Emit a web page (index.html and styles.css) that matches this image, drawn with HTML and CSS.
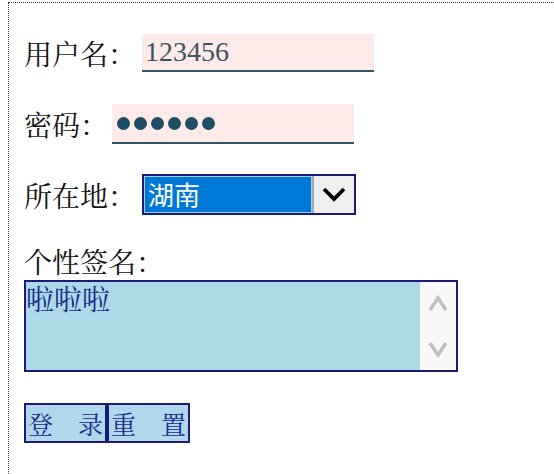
FILE: index.html
```html
<!DOCTYPE html>
<html lang="zh">
<head>
<meta charset="utf-8">
<title>表单</title>
<link rel="stylesheet" href="styles.css">
</head>
<body>
<form class="form">
  <div class="row row-user">
    <label class="label">用户名：</label>
    <input class="field field-user" type="text" value="123456">
  </div>
  <div class="row row-pwd">
    <label class="label">密码：</label>
    <div class="field field-pwd">
      <span class="dot"></span><span class="dot"></span><span class="dot"></span><span class="dot"></span><span class="dot"></span><span class="dot"></span>
    </div>
  </div>
  <div class="row row-loc">
    <label class="label">所在地：</label>
    <div class="select">
      <div class="select-value">湖南</div>
      <div class="select-btn">
        <svg width="26" height="18" viewBox="0 0 26 18"><polyline points="3,3 13,13 23,3" fill="none" stroke="#000" stroke-width="3.8"/></svg>
      </div>
    </div>
  </div>
  <div class="label label-sign">个性签名：</div>
  <div class="textarea">
    <div class="textarea-text">啦啦啦</div>
    <div class="scrollbar">
      <svg width="20" height="20" viewBox="0 0 20 20"><polyline points="2,17 10,5 18,17" fill="none" stroke="#bfbfbf" stroke-width="3.6"/></svg>
      <svg width="20" height="20" viewBox="0 0 20 20"><polyline points="2,3 10,15 18,3" fill="none" stroke="#bfbfbf" stroke-width="3.6"/></svg>
    </div>
  </div>
  <div class="buttons">
    <button type="button" class="btn">登　录</button><button type="button" class="btn">重　置</button>
  </div>
</form>
</body>
</html>
```

FILE: styles.css
```css
html {
  overflow: hidden;
}
body {
  margin: 2px 0 0 8px;
  background: #fff;
  font-family: "Noto Serif CJK SC", "Noto Sans CJK SC", "Liberation Serif", serif;
}
.form {
  width: 600px;
  min-height: 520px;
  border: 1px dotted #2e2e8f;
  padding: 31px 0 0 15px;
  box-sizing: border-box;
  display: flex;
  flex-direction: column;
  align-items: flex-start;
}
.row {
  display: flex;
  align-items: center;
}
.label {
  font-size: 28px;
  line-height: 32px;
  color: #111;
}
.row-user {
  height: 38px;
  margin-bottom: 32px;
}
.row-pwd {
  height: 40px;
  margin-bottom: 30px;
}
.row-loc {
  height: 41px;
  margin-bottom: 30px;
}
.field {
  box-sizing: border-box;
  border: none;
  border-bottom: 2px solid #2b5768;
  background: #ffeaea;
  outline: none;
  margin: 0;
}
.field-user {
  width: 232px;
  height: 38px;
  padding: 0 0 0 3px;
  margin-left: 6px;
  font-family: "Liberation Serif", serif;
  font-size: 28px;
  color: #3d5562;
}
.field-pwd {
  width: 242px;
  height: 40px;
  margin-left: 4px;
  padding-left: 5px;
  display: flex;
  align-items: center;
  gap: 4px;
}
.dot {
  width: 13px;
  height: 13px;
  border-radius: 50%;
  background: #1d4e63;
}
.select {
  margin-left: 6px;
  width: 214px;
  height: 41px;
  box-sizing: border-box;
  border: 2px solid #1c1c78;
  display: flex;
  background: #f0f0f0;
}
.select-value {
  flex: 1;
  background: #0078d7;
  border: 1px solid #9fd0f5;
  color: #fff;
  font-size: 26px;
  line-height: 33px;
  padding-left: 3px;
  font-family: "Noto Sans CJK SC", sans-serif;
}
.select-btn {
  width: 40px;
  border-left: 2px solid #a8a8a8;
  display: flex;
  align-items: center;
  justify-content: center;
  background: #f0f0f0;
}
.label-sign {
  margin-bottom: 3px;
}
.textarea {
  width: 434px;
  height: 92px;
  box-sizing: border-box;
  border: 2px solid #1c1c78;
  background: #add8e6;
  display: flex;
}
.textarea-text {
  flex: 1;
  color: #1a2a8c;
  font-size: 28px;
  line-height: 32px;
  padding-left: 0;
}
.scrollbar {
  width: 36px;
  background: #f8f8f8;
  display: flex;
  flex-direction: column;
  align-items: center;
  justify-content: space-between;
  padding: 11px 0 10px;
  box-sizing: border-box;
}
.buttons {
  margin-top: 31px;
  display: flex;
}
.btn {
  height: 40px;
  box-sizing: border-box;
  border: 2px solid #1c1c78;
  background: #b0d8ea;
  color: #1a2a8c;
  font-family: inherit;
  font-size: 25px;
  line-height: 34px;
  padding: 0 2px;
  margin: 0;
  width: 83px;
  white-space: nowrap;
}
```
